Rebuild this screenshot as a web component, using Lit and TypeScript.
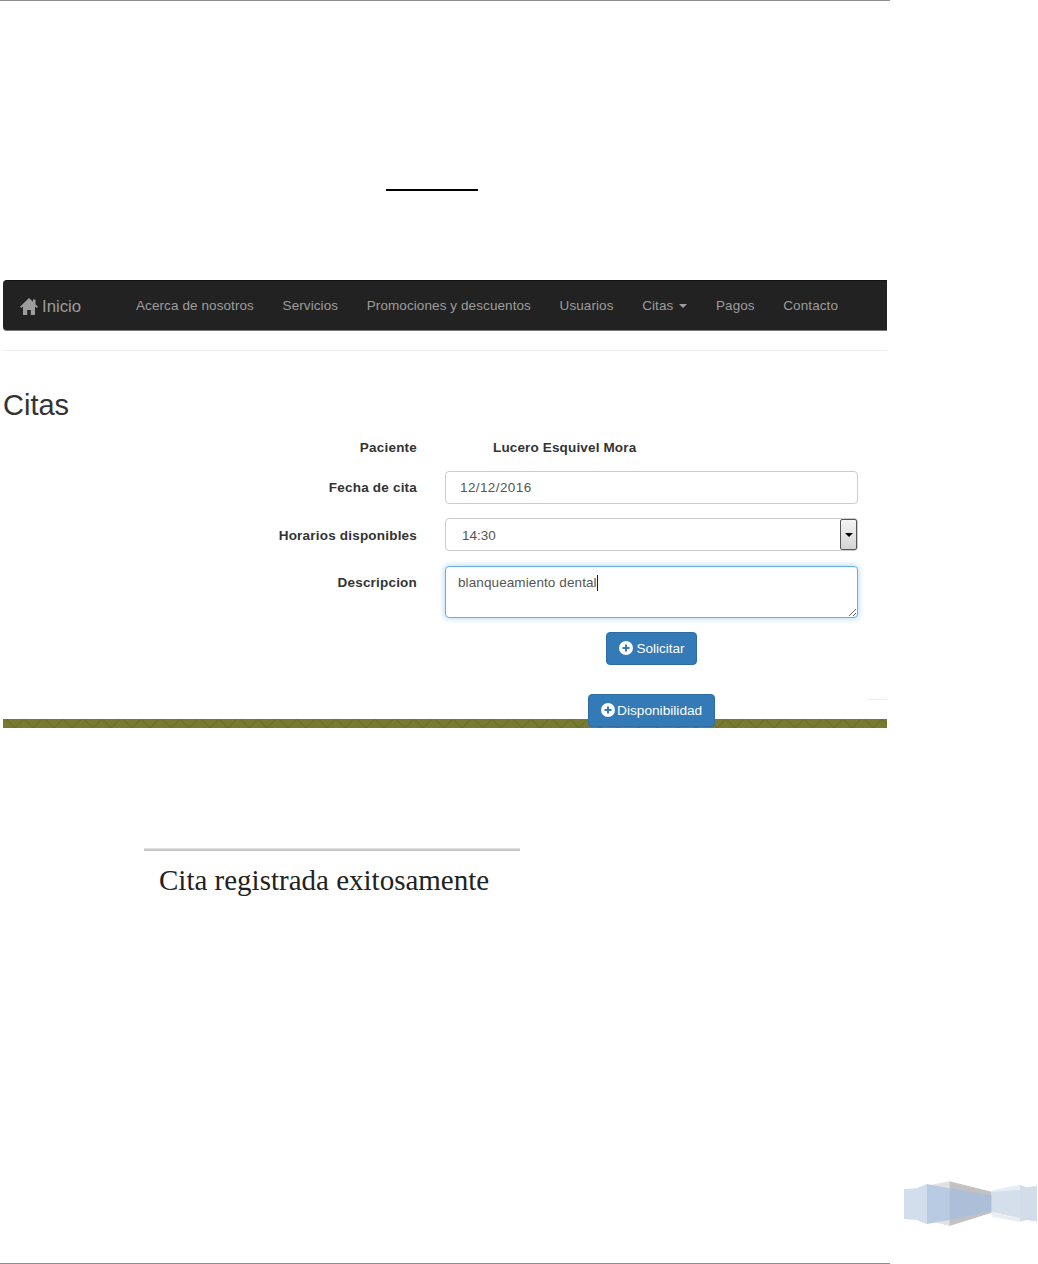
import { LitElement, html, css, svg } from "lit";
import { customElement } from "lit/decorators.js";

const plus = html`<svg class="plus" viewBox="0 0 14 14" aria-hidden="true"><circle cx="7" cy="7" r="7" fill="#fff"/><path d="M6 3.5h2V6h2.5v2H8v2.5H6V8H3.5V6H6z" fill="#337ab7"/></svg>`;

const corner = svg`
  <polygon points="110,47 178,34 178,168 110,150" fill="#e2e2e2"/>
  <polygon points="178,34 305,65 305,128 178,168" fill="#c2c2c2"/>
  <polygon points="305,65 390,58 390,145 305,128" fill="#e8e8e6"/>
  <polygon points="42,57 80,55 110,42 110,162 80,150 42,147" fill="#d3deec"/>
  <polygon points="110,42 178,55 178,150 110,162" fill="#b9cbe3"/>
  <polygon points="178,55 305,76 305,124 178,150" fill="#adbfd8"/>
  <polygon points="305,62 350,52 390,45 390,62 305,65" fill="#e6edf6"/>
  <polygon points="305,140 390,156 390,145 305,128" fill="#e9eef6"/>
  <polygon points="305,65 390,60 390,145 305,124" fill="#d5dfeb"/>
  <polygon points="390,45 410,52 441,48 441,155 410,150 390,155" fill="#d3ddea"/>
`;

@customElement("app-root")
export class AppRoot extends LitElement {
  static styles = css`
    :host { display: block; font-family: "Liberation Sans", Arial, sans-serif; color: #333; }
    .page { position: relative; height: 1264px; width: 1038px; display: flex; flex-direction: column; background: #fff; overflow: hidden; }
    .rule { width: 890px; height: 1px; background: #8f8f8f; flex: none; }
    .rule.bottom { margin-top: auto; }
    .sign { width: 92px; height: 2px; background: #000; margin: 188px 0 0 386px; flex: none; }
    .shot { width: 884px; margin: 89px 0 0 3px; flex: none; }
    nav { height: 51px; box-sizing: border-box; background: #222; border-radius: 4px 0 0 4px; border-top: 1px solid #111; border-bottom: 1px solid #777; display: flex; align-items: center; color: #9d9d9d; font-size: 13.5px; letter-spacing: .09px; padding-left: 17px; }
    .brand { display: flex; align-items: center; gap: 4px; font-size: 16.8px; letter-spacing: 0; width: 116px; flex: none; margin-top: 2px; }
    .home { width: 18px; height: 17px; }
    .links { display: flex; gap: 28.6px; }
    .links span { white-space: nowrap; }
    .caret { display: inline-block; width: 0; height: 0; border: 4px solid transparent; border-top-color: #9d9d9d; border-bottom: 0; margin-left: 6px; vertical-align: 2px; }
    hr { border: 0; height: 1px; background: #eee; margin: 19px 0 0; }
    h1 { font-size: 29px; font-weight: 400; line-height: 32px; margin: 38px 0 0; }
    form { display: grid; grid-template-columns: 414px 413px; column-gap: 28px; row-gap: 14px; margin-top: 16px; font-size: 13.5px; }
    label { font-weight: 700; text-align: right; align-self: center; letter-spacing: .2px; line-height: 20px; }
    label.low { padding-top: 2px; line-height: 18px; }
    label.top { align-self: start; padding-top: 7px; }
    .val { font-weight: 700; padding: 2px 0 0 48px; line-height: 18px; letter-spacing: .15px; }
    .ctl { box-sizing: border-box; height: 33px; border: 1px solid #ccc; border-radius: 4px; display: flex; align-items: center; color: #555; padding-left: 14px; background: #fff; }
    .date { letter-spacing: .4px; }
    .sel { padding-left: 16px; position: relative; margin-bottom: 1px; }
    .sel span.t { padding-top: 1px; }
    .arrow { position: absolute; right: 0; top: 0; bottom: 0; width: 17px; box-sizing: border-box; border: 1px solid #555; border-radius: 2px; background: linear-gradient(#f4f4f4, #d4d4d4); display: flex; align-items: center; justify-content: center; }
    .arrow i { width: 0; height: 0; border: 4px solid transparent; border-top: 4px solid #000; border-bottom: 0; }
    .area { position: relative; height: 52px; align-items: flex-start; border-color: #66afe9; box-shadow: 0 0 6px rgba(102,175,233,.6); padding: 8px 0 0 12px; line-height: 16px; letter-spacing: .1px; }
    .cursor { display: inline-block; width: 1px; height: 16px; background: #222; vertical-align: top; }
    .grip { position: absolute; right: 0; bottom: 0; width: 9px; height: 9px; }
    .actions { grid-column: 2; display: flex; justify-content: center; }
    .btn { box-sizing: border-box; height: 33px; display: inline-flex; align-items: center; gap: 3px; background: #337ab7; border: 1px solid #2e6da4; border-radius: 4px; color: #fff; padding: 0 11px 0 12px; white-space: nowrap; }
    .plus { width: 14px; height: 14px; margin-top: -2px; }
    .foot { position: relative; height: 9px; margin-top: 54px; background-color: #777a30; }
    .foot svg.band { display: block; width: 100%; height: 9px; }
    .foot .btn { position: absolute; top: -25px; left: 585px; font-size: 13.7px; gap: 2px; padding-right: 12px; }
    .foot .faint { position: absolute; right: 0; top: -20px; width: 20px; height: 1px; background: #eee; }
    .notice { width: 376px; margin: 120px 0 0 144px; flex: none; }
    .notice .line { height: 3px; background: linear-gradient(#e6e6e6, #b8b8b8); }
    .notice p { margin: 13px 0 0 15px; font: 29px/32px "Liberation Serif", "Times New Roman", serif; color: #222; }
    .corner { position: absolute; left: 890px; top: 1170px; width: 148px; height: 94px; }
  `;

  render() {
    return html`
      <div class="page">
        <div class="rule"></div>
        <div class="sign"></div>
        <div class="shot">
          <nav>
            <div class="brand">
              <svg class="home" viewBox="0 0 18 17" aria-hidden="true"><path d="M9 0 13 3.8V1.5h2.5v4.7L18 8.7 16.7 10 15 8.4V17h-4.2v-5H7.2v5H3V8.4L1.3 10 0 8.7z" fill="#9d9d9d"/></svg>
              <span>Inicio</span>
            </div>
            <div class="links">
              <span>Acerca de nosotros</span>
              <span>Servicios</span>
              <span>Promociones y descuentos</span>
              <span>Usuarios</span>
              <span>Citas<i class="caret"></i></span>
              <span>Pagos</span>
              <span>Contacto</span>
            </div>
          </nav>
          <hr />
          <h1>Citas</h1>
          <form>
            <label class="low">Paciente</label>
            <div class="val">Lucero Esquivel Mora</div>
            <label>Fecha de cita</label>
            <div class="ctl date">12/12/2016</div>
            <label class="low">Horarios disponibles</label>
            <div class="ctl sel"><span class="t">14:30</span><span class="arrow"><i></i></span></div>
            <label class="top">Descripcion</label>
            <div class="ctl area">
              <span>blanqueamiento dental<span class="cursor"></span></span>
              <svg class="grip" viewBox="0 0 9 9" aria-hidden="true"><path d="M1 8 8 1M5 8l3-3" stroke="#666" stroke-width="1" fill="none"/></svg>
            </div>
            <div class="actions"><span class="btn">${plus}Solicitar</span></div>
          </form>
          <div class="foot">
            <svg class="band" aria-hidden="true">
              <defs>
                <pattern id="zig" width="39" height="9" patternUnits="userSpaceOnUse">
                  <path d="M3 0 12 9M21 0 12 9M21 0 30 9M39 0 30 9" stroke="#6f7128" stroke-width="1.6" fill="none"/>
                </pattern>
              </defs>
              <rect width="100%" height="9" fill="url(#zig)"/>
            </svg>
            <div class="faint"></div>
            <span class="btn">${plus}Disponibilidad</span>
          </div>
        </div>
        <div class="notice">
          <div class="line"></div>
          <p>Cita registrada exitosamente</p>
        </div>
        <div class="rule bottom"></div>
        <svg class="corner" viewBox="0 0 444 282" aria-hidden="true">${corner}</svg>
      </div>
    `;
  }
}
